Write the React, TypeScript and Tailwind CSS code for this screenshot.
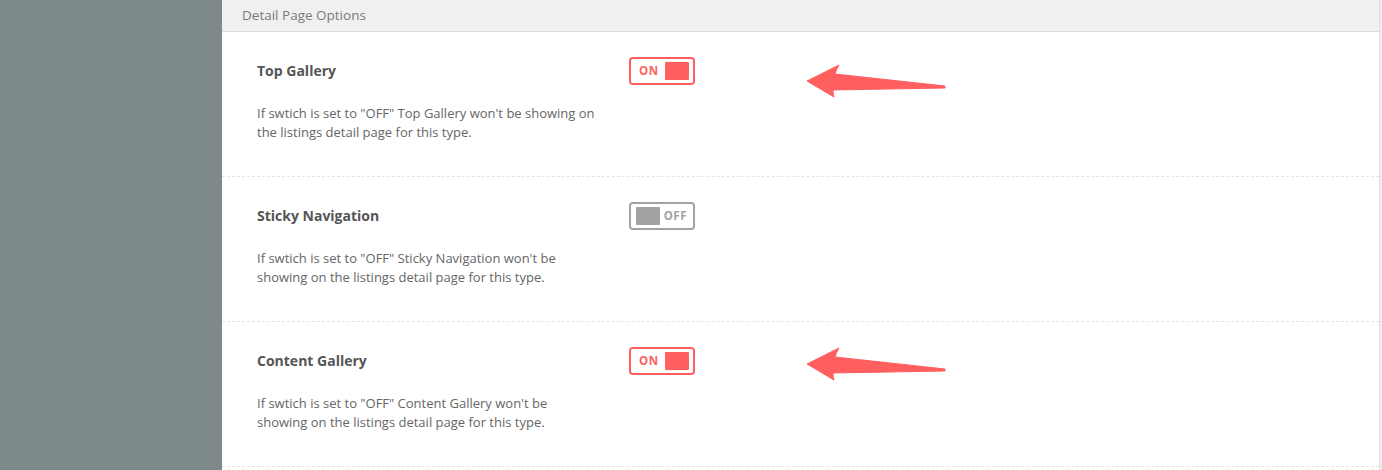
import React from 'react';

type Row = {
    title: string;
    on: boolean;
    text: string;
    arrow?: 'low' | 'high';
};

const rows: Row[] = [
    {
        title: 'Top Gallery',
        on: true,
        text: 'If swtich is set to "OFF" Top Gallery won\'t be showing on the listings detail page for this type.',
        arrow: 'low',
    },
    {
        title: 'Sticky Navigation',
        on: false,
        text: 'If swtich is set to "OFF" Sticky Navigation won\'t be showing on the listings detail page for this type.',
    },
    {
        title: 'Content Gallery',
        on: true,
        text: 'If swtich is set to "OFF" Content Gallery won\'t be showing on the listings detail page for this type.',
        arrow: 'high',
    },
];

function Toggle({ on }: { on: boolean }) {
    if (on) {
        return (
            <div className="flex h-[28px] w-[66px] items-center justify-between rounded-[4px] border-2 border-[#ff5f5f] pl-[8px] pr-[4px]">
                <span className="text-[11.5px] font-bold leading-none tracking-[0.5px] text-[#ff5f5f]">ON</span>
                <span className="h-[18px] w-[24px] rounded-[1px] bg-[#ff5f5f]" />
            </div>
        );
    }
    return (
        <div className="flex h-[28px] w-[66px] items-center justify-between rounded-[4px] border-2 border-[#a3a3a3] pl-[5px] pr-[6px]">
            <span className="h-[18px] w-[24px] rounded-[1px] bg-[#a3a3a3]" />
            <span className="text-[11.5px] font-bold leading-none tracking-[0.5px] text-[#a3a3a3]">OFF</span>
        </div>
    );
}

function Arrow({ pos }: { pos: 'low' | 'high' }) {
    return (
        <svg
            className={`absolute left-[584px] ${pos === 'low' ? 'top-[32px]' : 'top-[25px]'}`}
            width="142"
            height="36"
            viewBox="0 0 142 36"
        >
            <path
                d="M1 17 L33 1 Q30 6 29 10 L139 22 L139 24 L27 26 Q27 30 28 33 Z"
                fill="#ff5f5f"
                stroke="#ff5f5f"
                strokeWidth="1"
                strokeLinejoin="round"
            />
        </svg>
    );
}

export default function App() {
    return (
        <div className="flex h-[470px] w-full bg-white" style={{ fontFamily: '"Open Sans", "Noto Sans", sans-serif' }}>
            <aside className="w-[222px] shrink-0 bg-[#7e8a89]" />

            <main className="flex-1">
                <header className="h-[32px] border-b border-[#dcdcdc] bg-[#f0f0f0] pl-[20px] text-[13.5px] leading-[30px] text-[#7a7a7a]">
                    Detail Page Options
                </header>

                {rows.map((row) => (
                    <section
                        key={row.title}
                        className="relative flex h-[145px] border-b border-dashed border-[#e4e4e4] pl-[35px] pt-[25px]"
                    >
                        <div className="w-[372px] shrink-0">
                            <h3 className="mt-[5px] text-[14px] font-bold leading-[18px] text-[#555]">{row.title}</h3>
                            <p className="mt-[24px] w-[340px] text-[13px] leading-[19px] text-[#666]">{row.text}</p>
                        </div>
                        <div>
                            <Toggle on={row.on} />
                        </div>
                        {row.arrow && <Arrow pos={row.arrow} />}
                    </section>
                ))}
            </main>

            <div className="w-[3px] shrink-0 border-l border-[#e0e0e0] bg-[#eeeeee]" />
        </div>
    );
}
